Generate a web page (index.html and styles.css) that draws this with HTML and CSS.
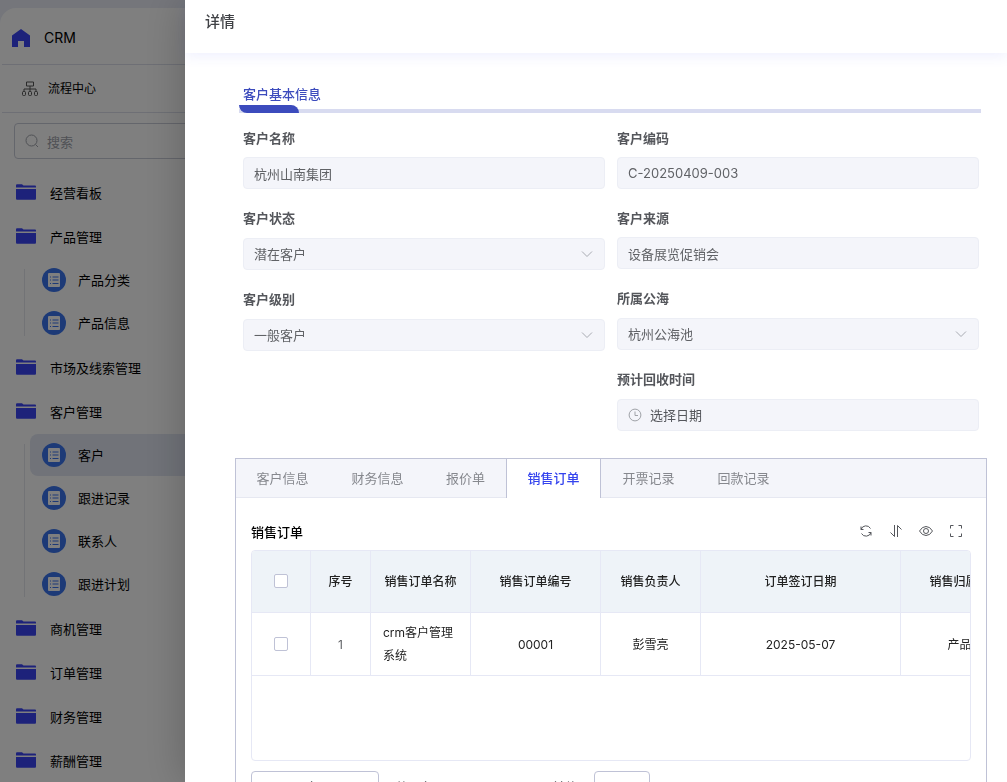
FILE: index.html
```html
<!DOCTYPE html>
<html lang="zh-CN">
<head>
<meta charset="utf-8">
<meta name="viewport" content="width=device-width, initial-scale=1">
<title>CRM</title>
<link rel="stylesheet" href="styles.css">
</head>
<body>
<svg class="sprite" aria-hidden="true">
  <symbol id="folder" viewBox="0 0 20 16"><path d="M0 1.5Q0 .3 1 .3H6L7.5 1.6H19Q20 1.6 20 2.6V3.5H0zM0 5H20V14.500Q20 15.700 19 15.700H1Q0 15.700 0 14.500z"/></symbol>
  <symbol id="doc" viewBox="0 0 24 24"><circle cx="12" cy="12" r="12" fill="#3a75ee"/><rect x="6" y="5" width="12" height="14" rx="1" fill="#fff"/><path d="M10.500 9H16.500M10.500 12H16.500M10.500 15.500H16.500M8 9H9M8 12H9M8 15.500H9" stroke="#3a75ee" stroke-width="1.200"/></symbol>
  <symbol id="chevron" viewBox="0 0 12 8"><path d="M1 1.500L6 6.500L11 1.500" fill="none" stroke="currentColor"/></symbol>
</svg>
<aside class="sidebar">
  <div class="brand">
    <svg class="brand-icon" viewBox="0 0 18 18"><path d="M9 0L18 6.500V18H12V12H6V18H0V6.500z"/></svg>
    <span>CRM</span>
  </div>
  <a class="flow" href="#">
    <svg class="flow-icon" viewBox="0 0 16 16"><path d="M4.500 1H11.500V5H4.500zM8 5V8M2 11V8H14V11M8 8V11"/><rect x=".5" y="10.500" width="3" height="4" rx="1"/><rect x="6.500" y="10.500" width="3" height="4" rx="1"/><rect x="12.500" y="10.500" width="3" height="4" rx="1"/></svg>
    <span>流程中心</span>
  </a>
  <label class="search">
    <svg viewBox="0 0 14 14"><circle cx="6.500" cy="6.500" r="5.500"/><path d="M10.500 10.500L13 13"/></svg>
    <input type="text" placeholder="搜索" aria-label="搜索">
  </label>
  <nav>
    <ul class="menu">
      <li><a class="menu-item" href="#"><svg><use href="#folder"/></svg>经营看板</a></li>
      <li><a class="menu-item" href="#"><svg><use href="#folder"/></svg>产品管理</a>
        <ul class="submenu">
          <li><a class="sub-item" href="#"><svg><use href="#doc"/></svg>产品分类</a></li>
          <li><a class="sub-item" href="#"><svg><use href="#doc"/></svg>产品信息</a></li>
        </ul>
      </li>
      <li><a class="menu-item" href="#"><svg><use href="#folder"/></svg>市场及线索管理</a></li>
      <li><a class="menu-item" href="#"><svg><use href="#folder"/></svg>客户管理</a>
        <ul class="submenu">
          <li><a class="sub-item active" href="#"><svg><use href="#doc"/></svg>客户</a></li>
          <li><a class="sub-item" href="#"><svg><use href="#doc"/></svg>跟进记录</a></li>
          <li><a class="sub-item" href="#"><svg><use href="#doc"/></svg>联系人</a></li>
          <li><a class="sub-item" href="#"><svg><use href="#doc"/></svg>跟进计划</a></li>
        </ul>
      </li>
      <li><a class="menu-item" href="#"><svg><use href="#folder"/></svg>商机管理</a></li>
      <li><a class="menu-item" href="#"><svg><use href="#folder"/></svg>订单管理</a></li>
      <li><a class="menu-item" href="#"><svg><use href="#folder"/></svg>财务管理</a></li>
      <li><a class="menu-item" href="#"><svg><use href="#folder"/></svg>薪酬管理</a></li>
    </ul>
  </nav>
</aside>

<div class="overlay">
  <section class="drawer">
    <header class="drawer-header">详情</header>
    <div class="drawer-body">
      <h2 class="section-title">客户基本信息</h2>
      <div class="section-bar"></div>
      <form class="form">
        <div class="form-col">
          <div class="field">
            <label for="name">客户名称</label>
            <div class="control"><input id="name" type="text" value="杭州山南集团" readonly></div>
          </div>
          <div class="field pick">
            <label for="status">客户状态</label>
            <div class="control"><select id="status"><option>潜在客户</option></select><svg class="chevron"><use href="#chevron"/></svg></div>
          </div>
          <div class="field pick">
            <label for="level">客户级别</label>
            <div class="control"><select id="level"><option>一般客户</option></select><svg class="chevron"><use href="#chevron"/></svg></div>
          </div>
        </div>
        <div class="form-col">
          <div class="field">
            <label for="code">客户编码</label>
            <div class="control"><input id="code" type="text" value="C-20250409-003" readonly></div>
          </div>
          <div class="field">
            <label for="source">客户来源</label>
            <div class="control"><input id="source" type="text" value="设备展览促销会" readonly></div>
          </div>
          <div class="field pick">
            <label for="pool">所属公海</label>
            <div class="control"><select id="pool"><option>杭州公海池</option></select><svg class="chevron"><use href="#chevron"/></svg></div>
          </div>
          <div class="field pick">
            <label for="recycle">预计回收时间</label>
            <div class="control"><svg class="clock" viewBox="0 0 14 14"><circle cx="7" cy="7" r="5.900"/><path d="M7 3.500V7.500H10"/></svg><input id="recycle" type="text" placeholder="选择日期"></div>
          </div>
        </div>
      </form>

      <div class="tabs">
        <div class="tab-list" role="tablist">
          <button class="tab" role="tab" type="button">客户信息</button>
          <button class="tab" role="tab" type="button">财务信息</button>
          <button class="tab short" role="tab" type="button">报价单</button>
          <button class="tab current" role="tab" type="button" aria-selected="true">销售订单</button>
          <button class="tab" role="tab" type="button">开票记录</button>
          <button class="tab" role="tab" type="button">回款记录</button>
        </div>
        <div class="panel">
          <div class="panel-head">
            <h3>销售订单</h3>
            <div class="tools">
              <button type="button" aria-label="刷新"><svg viewBox="0 0 14 14"><path d="M2 5.500A5.200 5.200 0 0 1 11.500 4.500M12 8.500A5.200 5.200 0 0 1 2.500 9.500M2 2.500V5.500H4.500M12 11.500V8.500H9.500"/></svg></button>
              <button type="button" aria-label="排序"><svg viewBox="0 0 14 14"><path d="M5.500 1V12.500L1.500 8.500M8.500 13V1.500L12.500 5.500"/></svg></button>
              <button type="button" aria-label="显示"><svg viewBox="0 0 14 14"><path d="M.5 7Q3 2.500 7 2.500T13.500 7Q11 11.500 7 11.500T.5 7z"/><circle cx="7" cy="7" r="2.500"/></svg></button>
              <button type="button" aria-label="全屏"><svg viewBox="0 0 14 14"><path d="M1.500 4.500V1.500H4.500M9.500 1.500H12.500V4.500M12.500 9.500V12.500H9.500M4.500 12.500H1.500V9.500"/></svg></button>
            </div>
          </div>
          <div class="table-wrap">
            <table>
              <colgroup><col class="w60"><col class="w60"><col class="w100"><col class="w130"><col class="w100"><col class="w200"><col class="w130"></colgroup>
              <thead>
                <tr><th><input type="checkbox" aria-label="全选"></th><th>序号</th><th>销售订单名称</th><th>销售订单编号</th><th>销售负责人</th><th>订单签订日期</th><th>销售归属部门</th></tr>
              </thead>
              <tbody>
                <tr><td><input type="checkbox" aria-label="选择第1行"></td><td class="index">1</td><td class="left">crm客户管理系统</td><td>00001</td><td>彭雪亮</td><td>2025-05-07</td><td>产品部</td></tr>
              </tbody>
            </table>
          </div>
          <div class="pager">
            <select class="page-size" aria-label="每页条数"><option>10条/页</option></select>
            <span class="total">共 1 条</span>
            <span>前往</span>
            <input class="page-no" type="text" value="1" aria-label="页码">
          </div>
        </div>
      </div>
    </div>
  </section>
</div>
</body>
</html>
```
FILE: styles.css
```css
* { box-sizing: border-box; }

body {
  margin: 0;
  height: 100vh;
  overflow: hidden;
  background: #eaedf7;
  color: #000;
  font: 13px/20px Inter, "Noto Sans CJK SC", sans-serif;
}

input, select, button { font: inherit; color: inherit; }
a { color: inherit; text-decoration: none; }
ul { margin: 0; padding: 0; list-style: none; }
.sprite { position: absolute; width: 0; height: 0; }

/* Sidebar */
.sidebar {
  width: 240px;
  min-height: 100vh;
  margin-top: 8px;
  padding-left: 2px;
  background: #fff;
  border-radius: 16px 0 0 0;
}
.brand {
  display: flex;
  align-items: center;
  gap: 14px;
  height: 57px;
  padding: 4px 10px 0;
  border-bottom: 1px solid #dcdfeb;
  font-size: 14px;
}
.brand-icon { width: 18px; height: 18px; fill: #3a45f5; }
.flow {
  display: flex;
  align-items: center;
  gap: 10px;
  height: 48px;
  padding: 1px 20px 0;
  border-bottom: 1px solid #dcdfeb;
  font-size: 12px;
}
.flow-icon { width: 16px; height: 16px; fill: none; stroke: #555; }
.search {
  display: flex;
  align-items: center;
  gap: 8px;
  height: 36px;
  margin: 10px 12px 12px;
  padding: 0 10px;
  border: 1px solid #c9ccd8;
  border-radius: 4px;
}
.search svg { flex: none; width: 14px; height: 14px; fill: none; stroke: #a0a3ab; }
.search input { width: 100%; padding: 2px 0 0; border: 0; outline: 0; background: none; }
.search input::placeholder { color: #a0a3ab; }

.menu-item {
  display: flex;
  align-items: center;
  gap: 14px;
  height: 44px;
  padding-left: 14px;
}
.menu-item svg { width: 20px; height: 16px; margin-bottom: 2px; fill: #3a45f5; }
.submenu { position: relative; padding: 0 0 1px 28px; }
.submenu::before {
  content: "";
  position: absolute;
  top: 10px;
  bottom: 10px;
  left: 22px;
  width: 1px;
  background: #e4e6ec;
}
.sub-item {
  display: flex;
  align-items: center;
  gap: 12px;
  height: 42px;
  margin-bottom: 1px;
  padding-left: 12px;
  border-radius: 8px;
}
.sub-item svg { width: 24px; height: 24px; }
.sub-item.active { background: #e2e7f3; }

/* Drawer */
.overlay { position: fixed; inset: 0; background: rgba(0, 0, 0, .5); }
.drawer {
  display: flex;
  flex-direction: column;
  height: 100%;
  margin-left: 185px;
  background: #fff;
  box-shadow: 0 0 40px rgba(0, 0, 0, .24);
}
.drawer-header {
  flex: none;
  padding: 12px 20px 21px;
  color: #404246;
  font-size: 15px;
  font-weight: 500;
  box-shadow: 0 4px 12px rgba(60, 75, 240, .08);
}
.drawer-body {
  flex: 1;
  min-height: 0;
  padding: 31px 20px 20px 50px;
  overflow-y: auto;
  scrollbar-width: none;
}
.section-title {
  margin: 0 8px;
  color: #3c4bbd;
  font-size: 13px;
  font-weight: 500;
}
.section-bar {
  height: 9px;
  margin: 0 6px 15px 4px;
  border-bottom: 4px solid #d8dbf0;
}
.section-bar::before {
  content: "";
  display: block;
  width: 60px;
  height: 8px;
  border-radius: 0 8px 0 8px;
  background: #3c4bbd;
  transform: translateY(1px);
}

.form { display: flex; gap: 12px; padding: 0 8px; margin-bottom: 27px; }
.form-col { display: flex; flex: 1; flex-direction: column; gap: 19px; min-width: 0; }
.field { display: flex; flex-direction: column; gap: 9px; }
.field.pick { gap: 10px; }
.field label { color: #55575c; font-weight: 600; }
.control {
  display: flex;
  align-items: center;
  gap: 8px;
  height: 32px;
  padding: 0 10px;
  border: 1px solid #eceef5;
  border-radius: 4px;
  background: #f4f5fa;
  color: #606266;
}
.control input, .control select {
  flex: 1;
  min-width: 0;
  height: 30px;
  padding: 0;
  border: 0;
  outline: 0;
  background: none;
  appearance: none;
}
.control input::placeholder { color: #55575c; opacity: 1; }
.chevron { width: 12px; height: 8px; margin-right: 1px; color: #a8abb2; }
.clock { width: 14px; height: 14px; fill: none; stroke: #a0a3a8; }

/* Tabs */
.tabs { border: 1px solid #bfc2d6; }
.tab-list {
  display: flex;
  height: 39px;
  background: #f4f5fa;
  border-bottom: 1px solid #e6e8f1;
}
.tab {
  width: 95px;
  height: 39px;
  padding: 0 0 2px;
  border: solid transparent;
  border-width: 0 1px;
  background: none;
  color: #86888e;
}
.tab.short { width: 81px; }
.tab:first-child { margin-left: -1px; }
.tab.current {
  border-color: #bfc2d6;
  background: #fff;
  color: #3443ee;
  font-weight: 500;
}
.panel { padding: 18px 15px; }
.panel-head {
  display: flex;
  align-items: center;
  justify-content: space-between;
  height: 30px;
  margin-bottom: 4px;
}
.panel-head h3 { margin: 0; padding-top: 2px; font-size: 13px; font-weight: 500; }
.tools { display: flex; gap: 16px; padding-right: 8px; }
.tools button { display: flex; padding: 0; border: 0; background: none; }
.tools svg { width: 14px; height: 14px; fill: none; stroke: #55575c; }

.table-wrap {
  height: 211px;
  overflow: hidden;
  border: 1px solid #e6e8f5;
  border-radius: 4px;
}
table {
  width: 779px;
  table-layout: fixed;
  border-collapse: separate;
  border-spacing: 0;
  color: #222;
  font-size: 12px;
  line-height: 23px;
}
.w60 { width: 60px; }
.w60:first-child { width: 59px; }
.w100 { width: 100px; }
.w130 { width: 130px; }
.w200 { width: 200px; }
th, td {
  padding: 0 12px;
  border: solid #e6e8f5;
  border-width: 0 1px 1px 0;
  text-align: center;
}
th { height: 62px; padding-bottom: 1px; background: #eef3f8; font-weight: 500; white-space: nowrap; }
td { height: 63px; }
td.left { text-align: left; }
td.index { color: #606266; }
table input {
  display: block;
  width: 14px;
  height: 14px;
  margin: 0 auto;
  border: 1px solid #bfc2d6;
  border-radius: 2px;
  background: #fff;
  appearance: none;
}

.pager { display: flex; align-items: center; gap: 16px; margin-top: 10px; color: #606266; }
.page-size, .page-no {
  height: 32px;
  padding: 0;
  border: 1px solid #bfc2d6;
  border-radius: 4px;
  background: #fff;
  text-align: center;
  text-align-last: center;
  appearance: none;
}
.page-size { width: 128px; }
.page-no { width: 56px; }
.total { width: 141px; }
```
